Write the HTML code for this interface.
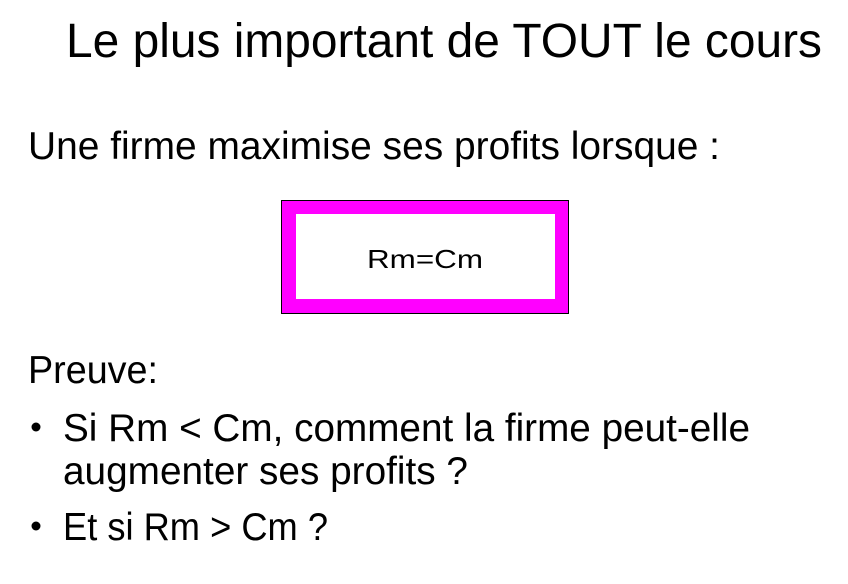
<!DOCTYPE html>
<html><head><meta charset="utf-8"><style>
html,body{margin:0;padding:0;background:#fff;width:848px;height:584px;overflow:hidden}
svg{display:block}
text{font-family:"Liberation Sans",sans-serif;fill:#000}
</style></head><body>
<svg width="848" height="584" viewBox="0 0 848 584">
<text x="66" y="57" font-size="48" textLength="756" lengthAdjust="spacingAndGlyphs">Le plus important de TOUT le cours</text>
<text x="28" y="159" font-size="39" textLength="692" lengthAdjust="spacingAndGlyphs">Une firme maximise ses profits lorsque :</text>
<rect x="281.5" y="200.5" width="287" height="113" fill="#ff00ff" stroke="#000" stroke-width="1"/>
<rect x="296" y="214" width="259" height="85" fill="#fff"/>
<text x="367" y="268" font-size="26" textLength="116" lengthAdjust="spacingAndGlyphs">Rm=Cm</text>
<text x="28" y="383" font-size="39" textLength="130" lengthAdjust="spacingAndGlyphs">Preuve:</text>
<circle cx="36" cy="427" r="4.5" fill="#000"/>
<text x="63" y="441" font-size="39" textLength="687" lengthAdjust="spacingAndGlyphs">Si Rm &lt; Cm, comment la firme peut-elle</text>
<text x="63" y="484" font-size="39" textLength="405" lengthAdjust="spacingAndGlyphs">augmenter ses profits ?</text>
<circle cx="36" cy="526" r="4.5" fill="#000"/>
<text x="63" y="540" font-size="39" textLength="265" lengthAdjust="spacingAndGlyphs">Et si Rm &gt; Cm ?</text>
</svg>
</body></html>
